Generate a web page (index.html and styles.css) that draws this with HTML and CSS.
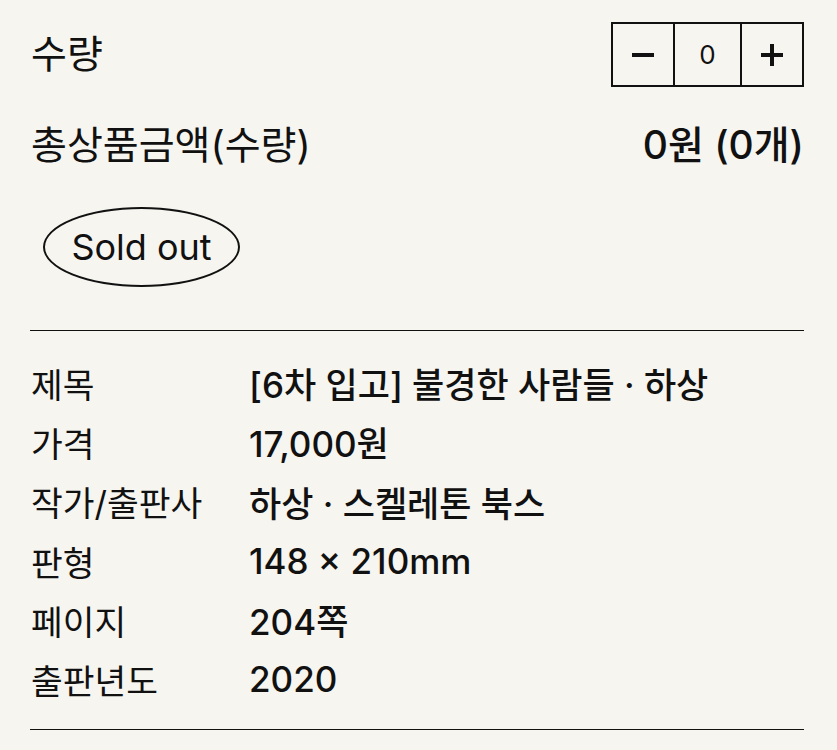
FILE: index.html
```html
<!DOCTYPE html>
<html lang="ko">
  <head>
    <meta charset="UTF-8" />
    <meta name="viewport" content="width=device-width, initial-scale=1.0" />
    <title>불경한 사람들</title>
    <link rel="stylesheet" href="styles.css">
  </head>
  <body>
    <div class="container">
      <div class="qty-row">
        <span class="label-lg">수량</span>
        <div class="qty-box">
          <button class="qty-btn" aria-label="minus">
            <svg width="22" height="22" viewBox="0 0 22 22"><rect x="0" y="9" width="22" height="4" fill="#111"/></svg>
          </button>
          <span class="qty-value">0</span>
          <button class="qty-btn" aria-label="plus">
            <svg width="22" height="22" viewBox="0 0 22 22"><rect x="0" y="9" width="22" height="4" fill="#111"/><rect x="9" y="0" width="4" height="22" fill="#111"/></svg>
          </button>
        </div>
      </div>

      <div class="total-row">
        <span class="label-lg">총상품금액(수량)</span>
        <span class="label-lg total">0원 (0개)</span>
      </div>

      <div class="soldout">Sold out</div>

      <div class="info">
        <div class="info-label">제목</div>
        <div class="info-value">[6차 입고] 불경한 사람들 · 하상</div>
        <div class="info-label">가격</div>
        <div class="info-value">17,000원</div>
        <div class="info-label">작가/출판사</div>
        <div class="info-value">하상 · 스켈레톤 북스</div>
        <div class="info-label">판형</div>
        <div class="info-value">148 × 210mm</div>
        <div class="info-label">페이지</div>
        <div class="info-value">204쪽</div>
        <div class="info-label">출판년도</div>
        <div class="info-value">2020</div>
      </div>
    </div>
  </body>
</html>
```

FILE: styles.css
```css
body {
  font-family: Inter, "Noto Sans CJK KR", sans-serif;
  margin: 0;
  padding: 0;
  background-color: #f6f5f0;
  color: #111;
}

.container {
  padding: 22px 33px 0 30px;
}

.qty-row,
.total-row {
  display: flex;
  justify-content: space-between;
  align-items: center;
}

.label-lg {
  font-size: 39px;
  line-height: 1.2;
  padding-left: 1px;
}

.qty-box {
  display: flex;
  border: 2px solid #111;
  height: 61px;
}

.qty-btn {
  width: 60px;
  border: none;
  background: none;
  padding: 0;
  display: flex;
  align-items: center;
  justify-content: center;
}

.qty-value {
  width: 65px;
  border-left: 2px solid #111;
  border-right: 2px solid #111;
  display: flex;
  align-items: center;
  justify-content: center;
  font-size: 26px;
}

.total-row {
  margin-top: 33px;
  height: 50px;
}

.total {
  font-weight: 500;
}

.soldout {
  margin: 37px 0 0 13px;
  width: 193px;
  height: 76px;
  border: 2px solid #111;
  border-radius: 50%;
  display: flex;
  align-items: center;
  justify-content: center;
  font-size: 36px;
}

.info {
  margin-top: 43px;
  border-top: 1px solid #111;
  border-bottom: 1px solid #111;
  padding: 22px 0 20px;
  display: grid;
  grid-template-columns: 219px 1fr;
  grid-auto-rows: 59.3px;
  align-items: center;
  font-size: 34.5px;
}

.info-label {
  padding-left: 1px;
}

.info-value {
  font-weight: 500;
  font-size: 35px;
}
```
